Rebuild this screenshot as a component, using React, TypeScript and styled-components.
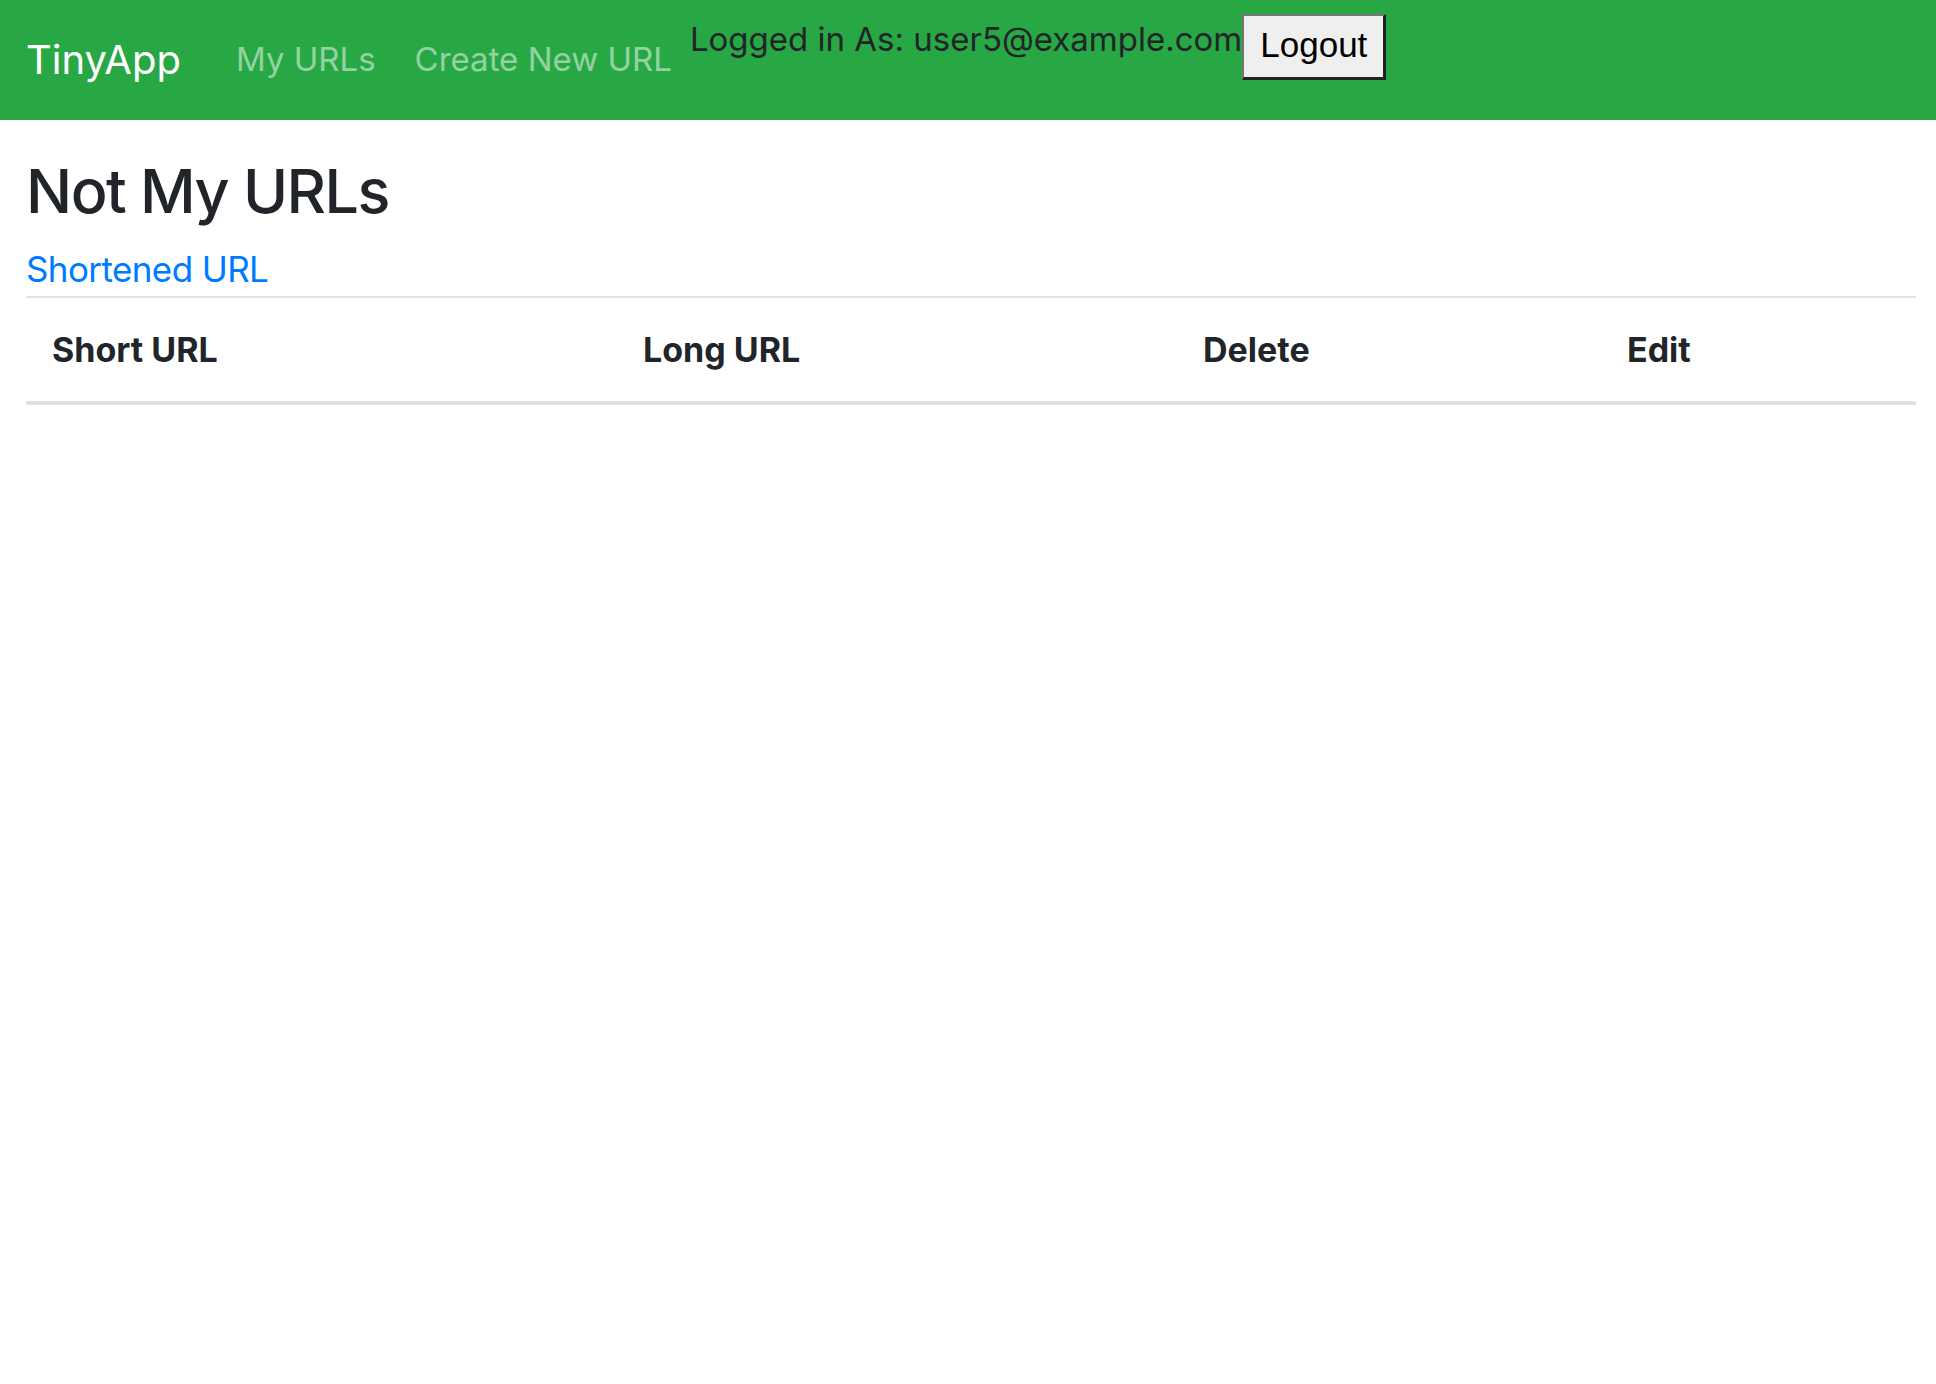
import React from "react";
import styled, { createGlobalStyle } from "styled-components";

const GlobalStyle = createGlobalStyle`
  html, body {
    margin: 0;
    padding: 0;
    background: #ffffff;
  }
  body {
    font-family: Inter, "Noto Sans", "Liberation Sans", sans-serif;
    color: #212529;
  }
  * { box-sizing: border-box; }
`;

const Navbar = styled.nav`
  display: flex;
  align-items: center;
  height: 120px;
  padding: 0 26px;
  background: #28a745;
`;

const Brand = styled.a`
  font-size: 40px;
  line-height: 1.5;
  color: #ffffff;
  text-decoration: none;
  margin-right: 55px;
  white-space: nowrap;
`;

const NavLinks = styled.div`
  display: flex;
  align-items: center;
  gap: 39px;
  margin-right: 18px;
`;

const NavLink = styled.a`
  font-size: 33px;
  line-height: 1.5;
  color: rgba(255, 255, 255, 0.5);
  text-decoration: none;
  white-space: nowrap;
`;

const LoginForm = styled.form`
  align-self: flex-start;
  display: flex;
  align-items: flex-start;
  margin: 14px 0 0;
`;

const LoginText = styled.span`
  font-size: 33px;
  line-height: 1.55;
  color: #212529;
  white-space: nowrap;
`;

const LogoutButton = styled.button`
  font-family: "Liberation Sans", Arial, sans-serif;
  font-size: 35px;
  line-height: 1.15;
  color: #000000;
  background: #efefef;
  border-style: solid;
  border-width: 2px 3px 3px 2px;
  border-color: #767676 #222222 #222222 #767676;
  padding: 9px 16px 12px;
  margin: 0;
`;

const Main = styled.main`
  padding: 0 20px 0 26px;
`;

const Title = styled.h1`
  font-size: 61px;
  font-weight: 500;
  letter-spacing: -1.5px;
  line-height: 1.2;
  margin: 35px 0 14px;
`;

const SubLink = styled.a`
  font-size: 35px;
  letter-spacing: -0.6px;
  line-height: 1.55;
  color: #007bff;
  text-decoration: none;
`;

const Table = styled.table`
  width: 100%;
  border-collapse: collapse;
`;

const HeadCell = styled.th<{ $width: number }>`
  width: ${(p) => p.$width}px;
  text-align: left;
  font-size: 34px;
  font-weight: 700;
  line-height: 1.5;
  padding: 26px;
  border-top: 2px solid #dee2e6;
  border-bottom: 4px solid #dee2e6;
`;

const columns = [
  { label: "Short URL", width: 591 },
  { label: "Long URL", width: 560 },
  { label: "Delete", width: 424 },
  { label: "Edit", width: 315 },
];

export default function App() {
  return (
    <>
      <GlobalStyle />
      <Navbar>
        <Brand href="#">TinyApp</Brand>
        <NavLinks>
          <NavLink href="#">My URLs</NavLink>
          <NavLink href="#">Create New URL</NavLink>
        </NavLinks>
        <LoginForm onSubmit={(e) => e.preventDefault()}>
          <LoginText>Logged in As: user5@example.com</LoginText>
          <LogoutButton type="submit">Logout</LogoutButton>
        </LoginForm>
      </Navbar>
      <Main>
        <Title>Not My URLs</Title>
        <SubLink href="#">Shortened URL</SubLink>
        <Table>
          <thead>
            <tr>
              {columns.map((c) => (
                <HeadCell key={c.label} $width={c.width}>
                  {c.label}
                </HeadCell>
              ))}
            </tr>
          </thead>
          <tbody />
        </Table>
      </Main>
    </>
  );
}
